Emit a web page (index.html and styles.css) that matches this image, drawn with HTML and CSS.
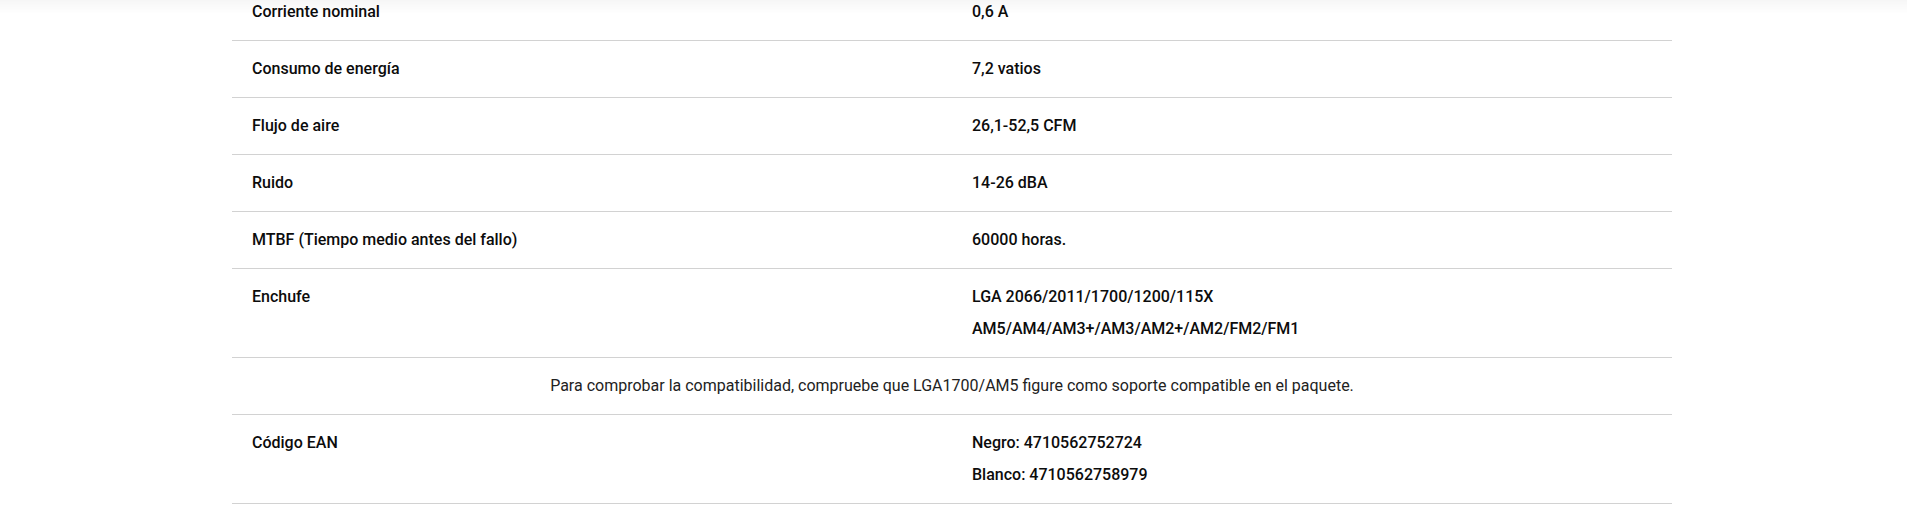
FILE: index.html
```html
<!DOCTYPE html>
<html lang="es">
<head>
  <meta charset="UTF-8" />
  <title>Especificaciones</title>
  <link rel="stylesheet" href="styles.css">
</head>
<body>

  <div class="top-shade"></div>

  <section class="specs">
    <table class="spec-table">
      <tr>
        <td class="label">Corriente nominal</td>
        <td class="value">0,6 A</td>
      </tr>
      <tr>
        <td class="label">Consumo de energía</td>
        <td class="value">7,2 vatios</td>
      </tr>
      <tr>
        <td class="label">Flujo de aire</td>
        <td class="value">26,1-52,5 CFM</td>
      </tr>
      <tr>
        <td class="label">Ruido</td>
        <td class="value">14-26 dBA</td>
      </tr>
      <tr>
        <td class="label">MTBF (Tiempo medio antes del fallo)</td>
        <td class="value">60000 horas.</td>
      </tr>
      <tr>
        <td class="label">Enchufe</td>
        <td class="value">
          <p>LGA 2066/2011/1700/1200/115X</p>
          <p>AM5/AM4/AM3+/AM3/AM2+/AM2/FM2/FM1</p>
        </td>
      </tr>
      <tr>
        <td class="note" colspan="2">Para comprobar la compatibilidad, compruebe que LGA1700/AM5 figure como soporte compatible en el paquete.</td>
      </tr>
      <tr>
        <td class="label">Código EAN</td>
        <td class="value">
          <p>Negro: 4710562752724</p>
          <p>Blanco: 4710562758979</p>
        </td>
      </tr>
    </table>
  </section>

</body>
</html>
```

FILE: styles.css
```css
body {
  margin: 0;
  background: #fff;
  font-family: Roboto, 'Liberation Sans', sans-serif;
  color: #111;
}

.top-shade {
  position: fixed;
  top: 0;
  left: 0;
  right: 0;
  height: 14px;
  background: linear-gradient(rgba(0, 0, 0, 0.035), rgba(0, 0, 0, 0));
  pointer-events: none;
}

.specs {
  width: 1440px;
  margin: -16px 0 0 232px;
}

.spec-table {
  width: 100%;
  border-collapse: collapse;
  table-layout: fixed;
}

.spec-table td {
  padding: 12px 20px;
  border-bottom: 1px solid #d2d2d2;
  font-size: 16px;
  line-height: 32px;
  vertical-align: top;
}

.label,
.value {
  width: 50%;
  font-weight: 500;
  color: #0c0c0c;
}

.value p {
  margin: 0;
}

.note {
  text-align: center;
  font-weight: 400;
  color: #222;
}
```
